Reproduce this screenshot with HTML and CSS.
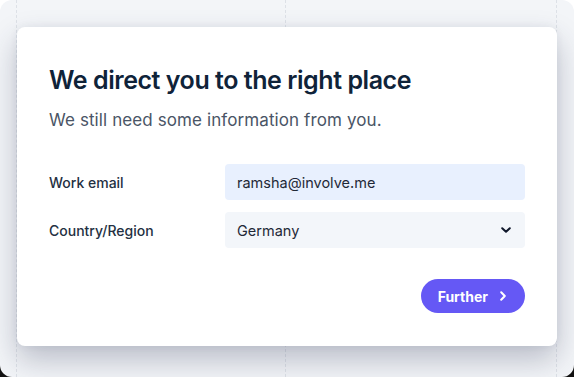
FILE: index.html
```html
<!DOCTYPE html>
<html lang="en">
<head>
  <meta charset="UTF-8" />
  <meta name="viewport" content="width=device-width, initial-scale=1.0"/>
  <title>Lead form</title>
  <link rel="stylesheet" href="styles.css">
</head>
<body>

<div class="frame">
  <div class="guide guide-left"></div>
  <div class="guide guide-mid"></div>
  <div class="guide guide-right"></div>

  <div class="card">
    <h1 class="title">We direct you to the right place</h1>
    <p class="subtitle">We still need some information from you.</p>

    <div class="fields">
      <label class="label" for="email">Work email</label>
      <input type="text" id="email" class="input input-email" value="ramsha@involve.me" />

      <label class="label" for="country">Country/Region</label>
      <div class="select">
        <span>Germany</span>
        <svg class="chevron-down" width="10" height="6" viewBox="0 0 10 6">
          <path d="M1.2 1.2 L5 4.8 L8.8 1.2" fill="none" stroke="#0f172a" stroke-width="2" stroke-linecap="round" stroke-linejoin="round"/>
        </svg>
      </div>
    </div>

    <div class="actions">
      <button class="btn-further">
        Further
        <svg width="6" height="10" viewBox="0 0 6 10">
          <path d="M1.2 1.2 L4.8 5 L1.2 8.8" fill="none" stroke="#fff" stroke-width="2" stroke-linecap="round" stroke-linejoin="round"/>
        </svg>
      </button>
    </div>
  </div>
</div>

</body>
</html>
```

FILE: styles.css
```css
html {
  background: linear-gradient(#ffffff 0, #ffffff 50%, #111111 50%, #111111 100%);
}
body {
  font-family: "Inter", "Noto Sans", sans-serif;
  margin: 0;
  height: 377px;
  overflow: hidden;
}
.frame {
  position: relative;
  height: 377px;
  border-radius: 12px;
  background: #f3f5f8;
  padding: 27px 17px 0;
  box-sizing: border-box;
  overflow: hidden;
}
.guide {
  position: absolute;
  top: 0;
  bottom: 0;
  border-left: 1px dashed #dde1e7;
}
.guide-left { left: 16px; }
.guide-mid { left: 285px; }
.guide-right { left: 556px; }

.card {
  position: relative;
  height: 319px;
  background: white;
  border-radius: 8px;
  padding: 37px 32px 0;
  box-sizing: border-box;
  box-shadow: 0 14px 30px rgba(40, 48, 80, 0.28), 0 0 8px rgba(40, 48, 80, 0.06);
}
.title {
  margin: 0;
  font-size: 25px;
  line-height: 32px;
  font-weight: 600;
  letter-spacing: -0.45px;
  color: #0f2339;
}
.subtitle {
  margin: 13px 0 0;
  font-size: 17px;
  line-height: 22px;
  letter-spacing: 0.1px;
  color: #4a5566;
}
.fields {
  display: grid;
  grid-template-columns: 176px 300px;
  row-gap: 12px;
  align-items: center;
  margin-top: 33px;
}
.label {
  font-size: 14px;
  font-weight: 500;
  color: #243042;
}
.input,
.select {
  height: 36px;
  border: none;
  border-radius: 4px;
  padding: 0 12px;
  box-sizing: border-box;
  font-family: inherit;
  font-size: 14.5px;
  color: #1f2937;
}
.input-email {
  background: #e8f0fe;
  outline: none;
}
.select {
  display: flex;
  align-items: center;
  justify-content: space-between;
  background: #f3f6fa;
}
.chevron-down {
  margin-right: 2px;
}
.actions {
  display: flex;
  justify-content: flex-end;
  margin-top: 31px;
}
.btn-further {
  display: flex;
  align-items: center;
  gap: 12px;
  height: 34px;
  padding: 0 19px 0 17px;
  border: none;
  border-radius: 17px;
  background: #6558f5;
  color: white;
  font-family: inherit;
  font-size: 14px;
  font-weight: 700;
  cursor: pointer;
}
```
